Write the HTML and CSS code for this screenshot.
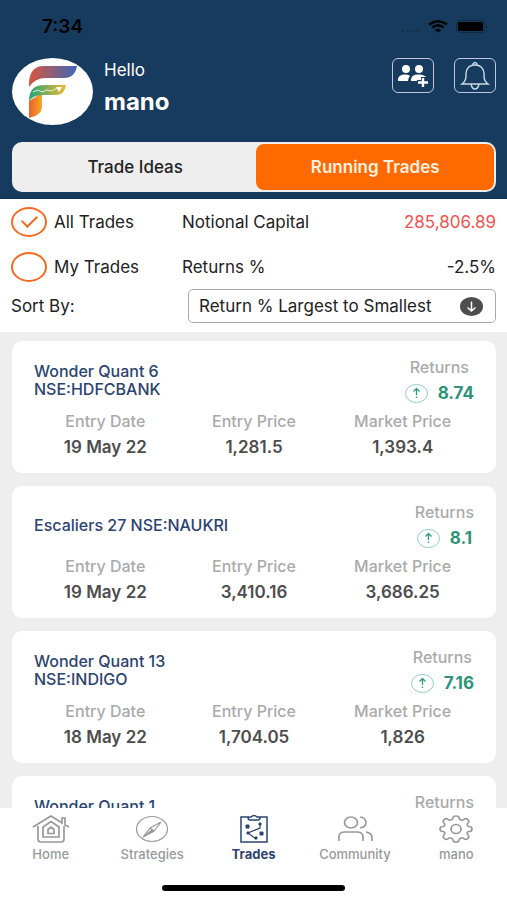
FILE: index.html
```html
<!DOCTYPE html>
<html lang="en">
<head>
    <meta charset="UTF-8">
    <meta name="viewport" content="width=device-width, initial-scale=1.0">
    <title>Running Trades</title>
    <link rel="stylesheet" href="styles.css">
</head>
<body>
    <div class="app">
        <header class="header">
            <div class="statusbar">
                <span class="time">7:34</span>
                <div class="signals">
                    <span class="dots">....</span>
                    <svg width="20" height="13" viewBox="0 0 20 13" fill="none" stroke="#000" stroke-width="2.4">
                        <path d="M1 4.500Q10-2 19 4.500M4.300 7.500Q10 3 15.700 7.500"/>
                        <path d="M7 10Q10 7.500 13 10L10 12.800z" fill="#000" stroke="none"/>
                    </svg>
                    <svg width="32" height="13" viewBox="0 0 32 13">
                        <rect x=".5" y=".5" width="28" height="12" rx="3" fill="none" stroke="#102a43"/>
                        <rect x="2" y="2" width="25" height="9" rx="1"/>
                        <path d="M30 4q2.500 2.500 0 5z" fill="#102a43"/>
                    </svg>
                </div>
            </div>

            <div class="profile">
                <div class="avatar">
                    <svg width="50" height="54" viewBox="0 0 50 54">
                        <defs>
                            <linearGradient id="top"><stop offset="0" stop-color="#d9553f"/><stop offset="1" stop-color="#3f68b8"/></linearGradient>
                            <linearGradient id="mid"><stop offset="0" stop-color="#22a579"/><stop offset="1" stop-color="#f3b62f"/></linearGradient>
                            <linearGradient id="leg"><stop offset="0" stop-color="#e8612c"/><stop offset="1" stop-color="#f7a823"/></linearGradient>
                        </defs>
                        <path d="M1 22Q0 1 16 1H49Q47 13 36 13H18Q7 13 1 22z" fill="url(#top)"/>
                        <path d="M1 36L14 28V42Q14 50 1 53z" fill="url(#leg)"/>
                        <path d="M1 36Q1 20 16 20H38Q37 30 27 30H15Q5 30 1 36z" fill="url(#mid)"/>
                        <path d="M5 27L10 25L14 27L19 25L24 26L29 23" fill="none" stroke="#fff" stroke-width=".8"/>
                        <path d="M28 22L34 22L31 27z" fill="#fff"/>
                    </svg>
                </div>
                <div class="greeting">
                    <div class="hello">Hello</div>
                    <div class="name">mano</div>
                </div>
                <div class="actions">
                    <button class="icon-btn" aria-label="Add member">
                        <svg width="32" height="24" viewBox="0 0 32 24" fill="#fff">
                            <circle cx="9" cy="5" r="4"/>
                            <circle cx="22" cy="5" r="4"/>
                            <path d="M1 17V15Q2 10 9 10.500Q12 10.500 13 12Q11 14 11 17zM14 17V15Q15 10 22 10.500Q27 10.500 29 13H24V16H20V17z"/>
                            <path d="M26 14V23M21 18.500H31" stroke="#fff" stroke-width="2.400"/>
                        </svg>
                    </button>
                    <button class="icon-btn" aria-label="Notifications">
                        <svg width="30" height="30" viewBox="0 0 30 30" fill="none" stroke="#c9dbe6" stroke-width="1.400">
                            <path d="M2 23Q6 20 6 15V12Q7 4 15 4Q23 4 24 12V15Q24 20 28 23zM13 4V3Q15 0 17 3V4M11 23Q12 28 15 28Q18 28 19 23"/>
                        </svg>
                    </button>
                </div>
            </div>

            <div class="tabs">
                <button class="tab">Trade Ideas</button>
                <button class="tab active">Running Trades</button>
            </div>
        </header>

        <section class="filters">
            <div class="row">
                <label class="choice"><input type="radio" name="trades" checked>All Trades</label>
                <span class="label">Notional Capital</span>
                <span class="value negative">285,806.89</span>
            </div>
            <div class="row">
                <label class="choice"><input type="radio" name="trades">My Trades</label>
                <span class="label">Returns %</span>
                <span class="value">-2.5%</span>
            </div>
            <div class="sort">
                <label for="sort">Sort By:</label>
                <div class="select">
                    <select id="sort">
                        <option>Return % Largest to Smallest</option>
                        <option>Return % Smallest to Largest</option>
                    </select>
                    <svg class="arrow" width="23" height="19" viewBox="0 0 23 19">
                        <ellipse cx="11.500" cy="9.500" rx="11.500" ry="9.500" fill="#4d4d4d"/>
                        <path d="M11.500 4.500V14M7.500 10.500L11.500 14L15.500 10.500" fill="none" stroke="#fff" stroke-width="1.500"/>
                    </svg>
                </div>
            </div>
        </section>

        <main class="list">
            <article class="card">
                <div class="top">
                    <h3>Wonder Quant 6<br>NSE:HDFCBANK</h3>
                    <div class="returns">
                        <div class="caption">Returns</div>
                        <div class="gain"><svg width="23" height="19" viewBox="0 0 23 19"><use href="#up"/></svg><b>8.74</b></div>
                    </div>
                </div>
                <dl class="prices">
                    <div><dt>Entry Date</dt><dd>19 May 22</dd></div>
                    <div><dt>Entry Price</dt><dd>1,281.5</dd></div>
                    <div><dt>Market Price</dt><dd>1,393.4</dd></div>
                </dl>
            </article>

            <article class="card">
                <div class="top">
                    <h3>Escaliers 27 NSE:NAUKRI</h3>
                    <div class="returns">
                        <div class="caption">Returns</div>
                        <div class="gain"><svg width="23" height="19" viewBox="0 0 23 19"><use href="#up"/></svg><b>8.1</b></div>
                    </div>
                </div>
                <dl class="prices">
                    <div><dt>Entry Date</dt><dd>19 May 22</dd></div>
                    <div><dt>Entry Price</dt><dd>3,410.16</dd></div>
                    <div><dt>Market Price</dt><dd>3,686.25</dd></div>
                </dl>
            </article>

            <article class="card">
                <div class="top">
                    <h3>Wonder Quant 13<br>NSE:INDIGO</h3>
                    <div class="returns">
                        <div class="caption">Returns</div>
                        <div class="gain"><svg width="23" height="19" viewBox="0 0 23 19"><use href="#up"/></svg><b>7.16</b></div>
                    </div>
                </div>
                <dl class="prices">
                    <div><dt>Entry Date</dt><dd>18 May 22</dd></div>
                    <div><dt>Entry Price</dt><dd>1,704.05</dd></div>
                    <div><dt>Market Price</dt><dd>1,826</dd></div>
                </dl>
            </article>

            <article class="card">
                <div class="top">
                    <h3>Wonder Quant 1<br>&nbsp;</h3>
                    <div class="returns">
                        <div class="caption">Returns</div>
                    </div>
                </div>
            </article>
        </main>

        <footer class="footer">
            <nav class="nav">
                <a href="#">
                    <svg width="38" height="30" viewBox="0 0 38 30">
                        <path d="M1 13L19 2L30 9V4H33V11L37 13M6 12V25Q6 28 9 28H29Q32 28 32 25V12"/>
                        <path d="M11 13L19 7.500L27 13V23H11z" />
                        <path d="M16 19.500V15.500L19 13L22 15.500V19.500z"/>
                    </svg>
                    Home
                </a>
                <a href="#">
                    <svg width="38" height="30" viewBox="0 0 38 30">
                        <ellipse cx="19" cy="15" rx="15.500" ry="12.500" stroke-width="1.200"/>
                        <path d="M10 23L17 14L28 8L21 17zM17 14L21 17" stroke-width="1.200"/>
                        <path d="M10 23L19 15.500L21 17z" fill="currentColor" stroke-width="1"/>
                    </svg>
                    Strategies
                </a>
                <a href="#" class="active">
                    <svg width="38" height="30" viewBox="0 0 38 30">
                        <path d="M13 3H6V28H32V3H25M13 3Q13 6 15 6H23Q25 6 25 3H22Q19 0 16 3z" stroke-width="1.500"/>
                        <path d="M25 10V14L13 19L21 25" stroke-width="1.200"/>
                        <path d="M11 11h3v3h-3zM24 9h2v2h-2zM25 18h3v3h-3zM12 18h2v2h-2zM20 23h2v2h-2z" fill="currentColor" stroke-width="1"/>
                    </svg>
                    Trades
                </a>
                <a href="#">
                    <svg width="38" height="30" viewBox="0 0 38 30">
                        <ellipse cx="15" cy="8.500" rx="6.500" ry="5.500"/>
                        <path d="M3 27V23Q3 18 9 18H21Q27 18 27 23V27M24 3Q30 4 30 8.500Q30 13 24 14M30 18Q36 19 36 24V27"/>
                    </svg>
                    Community
                </a>
                <a href="#">
                    <svg width="38" height="30" viewBox="0 0 38 30">
                        <ellipse cx="19" cy="15" rx="5" ry="4.500"/>
                        <path d="M16 4Q16 2 19 2Q22 2 22 4Q23 7 26 6Q28 4 30 5Q33 7 31 9Q29 12 32 12.500Q35 12.500 35 15Q35 17.500 32 17.500Q29 18 31 21Q33 23 30 25Q28 26 26 24Q23 23 22 26Q22 28 19 28Q16 28 16 26Q15 23 12 24Q10 26 8 25Q5 23 7 21Q9 18 6 17.500Q3 17.500 3 15Q3 12.500 6 12.500Q9 12 7 9Q5 7 8 5Q10 4 12 6Q15 7 16 4z"/>
                    </svg>
                    mano
                </a>
            </nav>
            <div class="handle"></div>
        </footer>
    </div>

    <svg class="symbols" width="0" height="0">
        <symbol id="up" viewBox="0 0 23 19">
            <ellipse cx="11.500" cy="9.500" rx="11" ry="9" fill="none" stroke="#8fd0b8"/>
            <path d="M11.500 11V5M8.500 7.500L11.500 4.500L14.500 7.500M11.500 12.500V14" fill="none" stroke="#2f9d7c" stroke-width="1.300"/>
        </symbol>
    </svg>
</body>
</html>
```
FILE: styles.css
```css
* {
    box-sizing: border-box;
}
body {
    margin: 0;
    font-family: Inter, "Liberation Sans", sans-serif;
    font-size: 17px;
    color: #222;
    background-color: #fff;
}
button, select {
    font-family: inherit;
    font-size: inherit;
    color: inherit;
}
button {
    padding: 0;
    cursor: pointer;
}
svg {
    display: block;
}
.app {
    display: flex;
    flex-direction: column;
    height: 100vh;
    overflow: hidden;
}
.header {
    background-color: #173b5e;
    border-bottom: 1px solid #0d2b55;
    padding: 16px 11px 6px 12px;
}
.statusbar {
    display: flex;
    justify-content: space-between;
    align-items: center;
    height: 20px;
    padding: 0 8px 0 30px;
    color: #000;
}
.time {
    font-size: 19px;
    font-weight: 600;
}
.signals {
    display: flex;
    align-items: center;
    gap: 8px;
}
.dots {
    color: #122f4b;
}
.profile {
    display: flex;
    align-items: flex-start;
    gap: 11px;
    margin-top: 22px;
    color: #fff;
}
.avatar {
    display: flex;
    align-items: center;
    justify-content: center;
    width: 81px;
    height: 67px;
    border-radius: 50%;
    background-color: #fff;
}
.greeting {
    flex: 1;
}
.hello {
    line-height: 24px;
}
.name {
    font-size: 24px;
    font-weight: 700;
    line-height: 40px;
}
.actions {
    display: flex;
    gap: 20px;
}
.icon-btn {
    display: flex;
    align-items: center;
    justify-content: center;
    width: 42px;
    height: 35px;
    border: 1px solid #c3c5df;
    border-radius: 6px;
    background: none;
}
.tabs {
    display: flex;
    height: 50px;
    margin-top: 17px;
    padding: 2px;
    border-radius: 10px;
    background-color: #eee;
}
.tab {
    flex: 1;
    border: 0;
    border-radius: 8px;
    background: none;
    font-weight: 500;
}
.tab.active {
    flex: 0 0 49.5%;
    background-color: #ff6a00;
    color: #fff0e0;
    font-weight: 600;
}
.filters {
    padding: 0 11px 9px;
}
.row {
    display: flex;
    align-items: center;
    height: 45px;
}
.choice {
    display: flex;
    align-items: center;
    gap: 7px;
    width: 171px;
}
.choice input {
    appearance: none;
    display: grid;
    place-items: center;
    width: 36px;
    height: 30px;
    margin: 0;
    border: 2px solid #f56a1d;
    border-radius: 50%;
}
.choice input:checked::before {
    content: "";
    width: 13px;
    height: 7px;
    margin-bottom: 4px;
    border: solid #f56a1d;
    border-width: 0 0 2px 2px;
    transform: rotate(-45deg);
}
.label {
    flex: 1;
}
.negative {
    color: #f0524f;
}
.sort {
    display: flex;
    align-items: center;
    justify-content: space-between;
}
.select {
    position: relative;
    width: 308px;
}
.select select {
    appearance: none;
    display: block;
    width: 100%;
    height: 34px;
    padding: 0 40px 0 10px;
    border: 1px solid #aaa;
    border-radius: 5px;
    background-color: #fff;
}
.arrow {
    position: absolute;
    top: 8px;
    right: 13px;
    pointer-events: none;
}
.list {
    flex: 1;
    min-height: 0;
    overflow: hidden;
    padding: 9px 11px 0 12px;
    background-color: #eee;
}
.card {
    height: 132px;
    margin-bottom: 13px;
    padding: 16px 22px 0;
    border-radius: 10px;
    background-color: #fff;
}
.top {
    display: flex;
    justify-content: space-between;
    align-items: center;
    height: 54px;
}
.card h3 {
    margin: 0;
    padding-bottom: 8px;
    font-size: 16px;
    font-weight: 500;
    line-height: 18px;
    color: #2b4470;
}
.returns {
    display: flex;
    flex-direction: column;
    align-items: center;
    align-self: flex-start;
}
.caption, dt {
    font-size: 16px;
    line-height: 20px;
    font-weight: 500;
    color: #aaa;
}
.gain {
    display: flex;
    align-items: center;
    gap: 10px;
    height: 32px;
    color: #2b9478;
}
.prices {
    display: flex;
    margin: 0 -3px;
    text-align: center;
}
.prices div {
    flex: 1;
}
dd {
    margin: 0;
    font-weight: 600;
    line-height: 32px;
    color: #4d4d4d;
}
.footer {
    height: 92px;
    background-color: #fff;
}
.nav {
    display: flex;
    padding-top: 6px;
}
.nav a {
    display: flex;
    flex: 1;
    flex-direction: column;
    align-items: center;
    gap: 3px;
    font-size: 13px;
    font-weight: 500;
    line-height: 14px;
    color: #999;
    text-decoration: none;
}
.nav svg {
    fill: none;
    stroke: currentColor;
    stroke-width: 1.7;
}
.nav .active {
    color: #2b4470;
    font-weight: 700;
}
.handle {
    width: 36%;
    height: 6px;
    margin: 24px auto 0;
    border-radius: 3px;
    background-color: #000;
}
.symbols {
    position: absolute;
}
```
